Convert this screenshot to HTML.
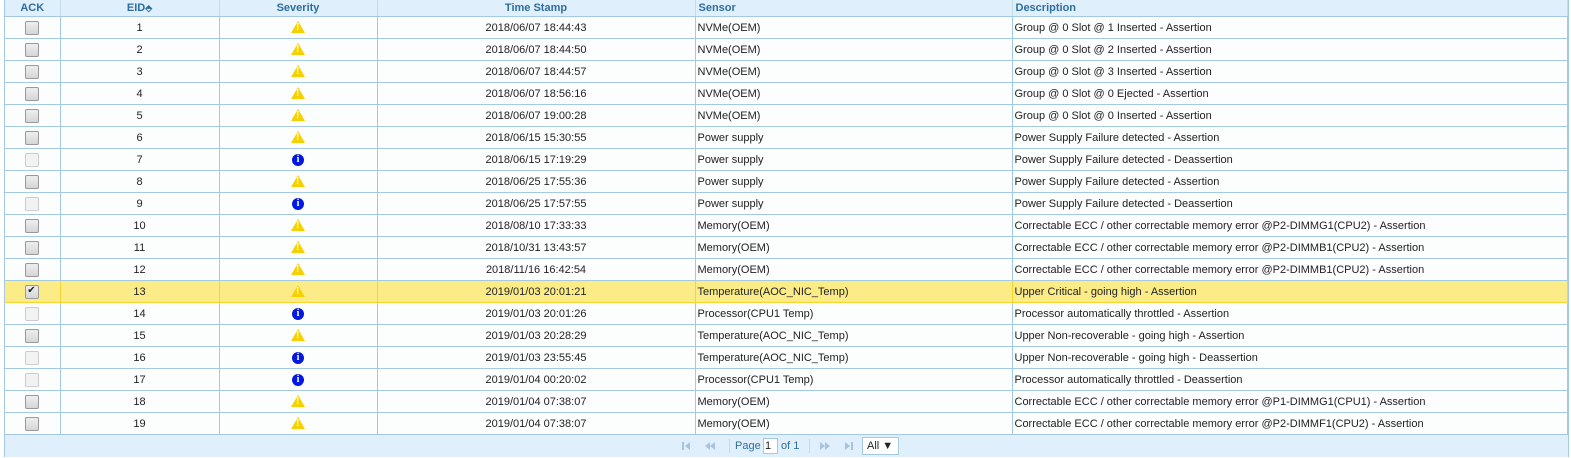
<!DOCTYPE html><html><head><style>
body{margin:0;background:#fff;font-family:"Liberation Sans",sans-serif;font-size:11px;color:#222}
.w{position:absolute;left:4px;top:0;width:1563px;height:457px;border-left:1px solid #a6c9e2;border-right:1px solid #a6c9e2;background:#dfeffc}
table{border-collapse:collapse;table-layout:fixed;width:1563px;background:#fcfdfd}
th{height:16px;background:#dfeffc;color:#2e6e9e;font-weight:bold;font-size:11px;border-right:1px solid #c5dbec;border-bottom:1px solid #a6c9e2;padding:0;line-height:14px}
td{height:21px;border-right:1px solid #a6c9e2;border-bottom:1px solid #a6c9e2;padding:0 2px;text-align:center;white-space:nowrap;overflow:hidden}
td.l{text-align:left}
tr.h td{background:#fbec88;border-color:#fad42e}
.cb{display:inline-block;width:12px;height:12px;border:1px solid #999;border-radius:2px;background:linear-gradient(#eee,#d6d6d6);vertical-align:middle;position:relative}
.cb.d{border-color:#ccc;background:#f2f2f2}
.cb.c:after{content:"✔";position:absolute;left:1px;top:-1px;font-size:10px;color:#222}
.wa{display:inline-block;width:0;height:0;border-left:7px solid transparent;border-right:7px solid transparent;border-bottom:12px solid #f7d000;position:relative;vertical-align:-1px}
.wa:after{content:"!";position:absolute;left:-2px;top:1px;font-size:10px;font-weight:bold;color:#fff;line-height:12px}
.in{display:inline-block;width:12px;height:12px;border-radius:50%;background:#0018e0;color:#fff;font-weight:bold;font-size:10px;line-height:12px;text-align:center;vertical-align:middle;font-family:"Liberation Serif",serif}
.f{position:absolute;top:434px;left:0;width:100%;height:23px;color:#2e6e9e;font-size:11px}
.f>*{position:absolute}
</style></head><body><div class="w">
<table>
<colgroup><col style="width:55px"><col style="width:159px"><col style="width:158px"><col style="width:318px"><col style="width:317px"><col></colgroup>
<tr><th>ACK</th><th>EID<span style="font-size:9px">⬘</span></th><th>Severity</th><th>Time Stamp</th><th style="text-align:left;padding-left:3px">Sensor</th><th style="text-align:left;padding-left:3px">Description</th></tr>
<tr><td><span class="cb"></span></td><td>1</td><td><span class="wa"></span></td><td>2018/06/07 18:44:43</td><td class="l">NVMe(OEM)</td><td class="l">Group @ 0 Slot @ 1 Inserted - Assertion</td></tr>
<tr><td><span class="cb"></span></td><td>2</td><td><span class="wa"></span></td><td>2018/06/07 18:44:50</td><td class="l">NVMe(OEM)</td><td class="l">Group @ 0 Slot @ 2 Inserted - Assertion</td></tr>
<tr><td><span class="cb"></span></td><td>3</td><td><span class="wa"></span></td><td>2018/06/07 18:44:57</td><td class="l">NVMe(OEM)</td><td class="l">Group @ 0 Slot @ 3 Inserted - Assertion</td></tr>
<tr><td><span class="cb"></span></td><td>4</td><td><span class="wa"></span></td><td>2018/06/07 18:56:16</td><td class="l">NVMe(OEM)</td><td class="l">Group @ 0 Slot @ 0 Ejected - Assertion</td></tr>
<tr><td><span class="cb"></span></td><td>5</td><td><span class="wa"></span></td><td>2018/06/07 19:00:28</td><td class="l">NVMe(OEM)</td><td class="l">Group @ 0 Slot @ 0 Inserted - Assertion</td></tr>
<tr><td><span class="cb"></span></td><td>6</td><td><span class="wa"></span></td><td>2018/06/15 15:30:55</td><td class="l">Power supply</td><td class="l">Power Supply Failure detected - Assertion</td></tr>
<tr><td><span class="cb d"></span></td><td>7</td><td><span class="in">i</span></td><td>2018/06/15 17:19:29</td><td class="l">Power supply</td><td class="l">Power Supply Failure detected - Deassertion</td></tr>
<tr><td><span class="cb"></span></td><td>8</td><td><span class="wa"></span></td><td>2018/06/25 17:55:36</td><td class="l">Power supply</td><td class="l">Power Supply Failure detected - Assertion</td></tr>
<tr><td><span class="cb d"></span></td><td>9</td><td><span class="in">i</span></td><td>2018/06/25 17:57:55</td><td class="l">Power supply</td><td class="l">Power Supply Failure detected - Deassertion</td></tr>
<tr><td><span class="cb"></span></td><td>10</td><td><span class="wa"></span></td><td>2018/08/10 17:33:33</td><td class="l">Memory(OEM)</td><td class="l">Correctable ECC / other correctable memory error @P2-DIMMG1(CPU2) - Assertion</td></tr>
<tr><td><span class="cb"></span></td><td>11</td><td><span class="wa"></span></td><td>2018/10/31 13:43:57</td><td class="l">Memory(OEM)</td><td class="l">Correctable ECC / other correctable memory error @P2-DIMMB1(CPU2) - Assertion</td></tr>
<tr><td><span class="cb"></span></td><td>12</td><td><span class="wa"></span></td><td>2018/11/16 16:42:54</td><td class="l">Memory(OEM)</td><td class="l">Correctable ECC / other correctable memory error @P2-DIMMB1(CPU2) - Assertion</td></tr>
<tr class="h"><td><span class="cb c"></span></td><td>13</td><td><span class="wa"></span></td><td>2019/01/03 20:01:21</td><td class="l">Temperature(AOC_NIC_Temp)</td><td class="l">Upper Critical - going high - Assertion</td></tr>
<tr><td><span class="cb d"></span></td><td>14</td><td><span class="in">i</span></td><td>2019/01/03 20:01:26</td><td class="l">Processor(CPU1 Temp)</td><td class="l">Processor automatically throttled - Assertion</td></tr>
<tr><td><span class="cb"></span></td><td>15</td><td><span class="wa"></span></td><td>2019/01/03 20:28:29</td><td class="l">Temperature(AOC_NIC_Temp)</td><td class="l">Upper Non-recoverable - going high - Assertion</td></tr>
<tr><td><span class="cb d"></span></td><td>16</td><td><span class="in">i</span></td><td>2019/01/03 23:55:45</td><td class="l">Temperature(AOC_NIC_Temp)</td><td class="l">Upper Non-recoverable - going high - Deassertion</td></tr>
<tr><td><span class="cb d"></span></td><td>17</td><td><span class="in">i</span></td><td>2019/01/04 00:20:02</td><td class="l">Processor(CPU1 Temp)</td><td class="l">Processor automatically throttled - Deassertion</td></tr>
<tr><td><span class="cb"></span></td><td>18</td><td><span class="wa"></span></td><td>2019/01/04 07:38:07</td><td class="l">Memory(OEM)</td><td class="l">Correctable ECC / other correctable memory error @P1-DIMMG1(CPU1) - Assertion</td></tr>
<tr><td><span class="cb"></span></td><td>19</td><td><span class="wa"></span></td><td>2019/01/04 07:38:07</td><td class="l">Memory(OEM)</td><td class="l">Correctable ECC / other correctable memory error @P2-DIMMF1(CPU2) - Assertion</td></tr>
</table>
<div class="f">
<svg style="left:676px;top:7px" width="10" height="10"><rect x="1" y="1" width="2" height="8" fill="#a8c4dc"/><path d="M9 1 L4 5 L9 9Z" fill="#a8c4dc"/></svg>
<svg style="left:699px;top:7px" width="12" height="10"><path d="M6 1 L1 5 L6 9Z M11 1 L6 5 L11 9Z" fill="#a8c4dc"/></svg>
<div style="left:724px;top:5px;width:1px;height:14px;background:#c5dbec"></div>
<span style="left:730px;top:6px">Page</span>
<span style="left:758px;top:4px;width:12px;height:14px;border:1px solid #a6c9e2;background:#fff;color:#222;padding-left:1px;line-height:14px">1</span>
<span style="left:776px;top:6px">of 1</span>
<div style="left:804px;top:5px;width:1px;height:14px;background:#c5dbec"></div>
<svg style="left:814px;top:7px" width="12" height="10"><path d="M1 1 L6 5 L1 9Z M6 1 L11 5 L6 9Z" fill="#a8c4dc"/></svg>
<svg style="left:839px;top:7px" width="10" height="10"><path d="M1 1 L6 5 L1 9Z" fill="#a8c4dc"/><rect x="7" y="1" width="2" height="8" fill="#a8c4dc"/></svg>
<span style="left:857px;top:3px;width:27px;height:16px;border:1px solid #a6c9e2;background:#fff;color:#222;padding:0 4px;line-height:16px">All ▼</span>
</div>
</div></body></html>
